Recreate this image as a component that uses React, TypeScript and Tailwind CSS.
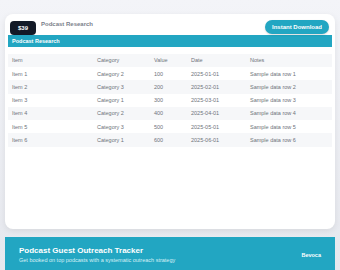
const rows = [
  { item: 'Item 1', category: 'Category 2', value: '100', date: '2025-01-01', notes: 'Sample data row 1' },
  { item: 'Item 2', category: 'Category 3', value: '200', date: '2025-02-01', notes: 'Sample data row 2' },
  { item: 'Item 3', category: 'Category 1', value: '300', date: '2025-03-01', notes: 'Sample data row 3' },
  { item: 'Item 4', category: 'Category 2', value: '400', date: '2025-04-01', notes: 'Sample data row 4' },
  { item: 'Item 5', category: 'Category 3', value: '500', date: '2025-05-01', notes: 'Sample data row 5' },
  { item: 'Item 6', category: 'Category 1', value: '600', date: '2025-06-01', notes: 'Sample data row 6' },
];

const cols = 'grid grid-cols-[85px_57px_37px_59px_1fr] items-center px-[4px]';

export default function App() {
  return (
    <div className="w-[340px] h-[270px] overflow-hidden bg-gradient-to-b from-[#f3f4f8] to-[#e6e8ee] font-['Liberation_Sans',Arial,sans-serif]">
      {/* Preview card */}
      <div className="mx-[5px] mt-[14px] h-[215px] bg-white rounded-[8px] shadow-[0_2px_6px_rgba(0,0,0,0.08)] px-[3px] pt-[6px] flex flex-col">
        <div className="flex items-start h-[15px] relative z-10">
          <div className="ml-[2px] mt-[1px] h-[14px] w-[26px] rounded-[4px] bg-[#131a27] text-white text-[6px] font-bold flex items-center justify-center">
            $39
          </div>
          <span className="ml-[5px] mt-[0px] text-[6px] font-bold text-[#7a808a]">Podcast Research</span>
          <div className="ml-auto mr-[3px] h-[14px] px-[7px] rounded-full bg-[#22a6c2] text-white text-[6px] font-bold flex items-center shadow-[0_1px_2px_rgba(0,0,0,0.15)]">
            Instant Download
          </div>
        </div>

        <div className="h-[12px] bg-[#22a6c2] flex items-center px-[4px]">
          <span className="text-[5.5px] font-bold text-white">Podcast Research</span>
        </div>

        <div className="mt-[7px] text-[5.5px] text-[#6e737b]">
          <div className={`${cols} h-[13px] bg-[#f6f7f9]`}>
            <span>Item</span>
            <span>Category</span>
            <span>Value</span>
            <span>Date</span>
            <span>Notes</span>
          </div>
          {rows.map((r, i) => (
            <div key={i} className={`${cols} h-[13.25px] ${i % 2 === 1 ? 'bg-[#f6f7f9]' : 'bg-white'}`}>
              <span>{r.item}</span>
              <span>{r.category}</span>
              <span>{r.value}</span>
              <span>{r.date}</span>
              <span>{r.notes}</span>
            </div>
          ))}
        </div>
      </div>

      {/* Footer banner */}
      <div className="mx-[5px] mt-[8px] h-[40px] bg-[#22a6c2] flex items-start pl-[14px] pr-[14px] pt-[8px]">
        <div className="flex flex-col">
          <span className="text-[8px] font-bold text-white leading-[11px]">Podcast Guest Outreach Tracker</span>
          <span className="text-[5.5px] text-[#d6f0f6] leading-[8px]">Get booked on top podcasts with a systematic outreach strategy</span>
        </div>
        <span className="ml-auto mt-[6px] text-[5.5px] font-bold text-white">Bevoca</span>
      </div>
    </div>
  );
}
